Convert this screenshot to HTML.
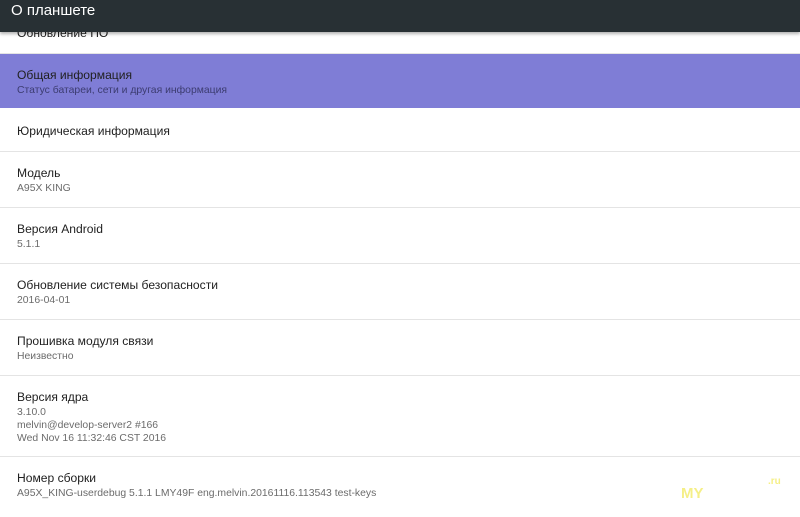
<!DOCTYPE html>
<html><head><meta charset="utf-8"><style>
body{margin:0;width:800px;height:511px;overflow:hidden;background:#fff;font-family:"Liberation Sans",sans-serif;position:relative}
.hdr{position:absolute;left:0;top:0;width:800px;height:32px;background:#283034;color:#fff;font-size:15px;line-height:22px;padding-left:11px;box-sizing:border-box;box-shadow:0 2px 3px rgba(0,0,0,.3);z-index:2}
.it{position:absolute;left:0;width:800px;border-bottom:1px solid #e4e4e4;box-sizing:border-box}
.t{position:absolute;left:17px;font-size:12.1px;color:#212121;white-space:nowrap}
.s{position:absolute;left:17px;font-size:10.4px;color:#6b6b6b;line-height:13px;white-space:nowrap}
</style></head><body>
<div class="hdr">О планшете</div>
<div class="it" style="top:0;height:54px"><div class="t" style="top:26px">Обновление ПО</div></div>
<div class="it" style="top:54px;height:54px;background:#7f7dd6;border:none"><div class="t" style="top:14px">Общая информация</div><div class="s" style="top:30px;color:#3c3c70">Статус батареи, сети и другая информация</div></div>
<div class="it" style="top:108px;height:44px"><div class="t" style="top:16px">Юридическая информация</div></div>
<div class="it" style="top:152px;height:56px"><div class="t" style="top:14px">Модель</div><div class="s" style="top:30px">A95X KING</div></div>
<div class="it" style="top:208px;height:56px"><div class="t" style="top:14px">Версия Android</div><div class="s" style="top:30px">5.1.1</div></div>
<div class="it" style="top:264px;height:56px"><div class="t" style="top:14px">Обновление системы безопасности</div><div class="s" style="top:30px">2016-04-01</div></div>
<div class="it" style="top:320px;height:56px"><div class="t" style="top:14px">Прошивка модуля связи</div><div class="s" style="top:30px">Неизвестно</div></div>
<div class="it" style="top:376px;height:81px"><div class="t" style="top:14px">Версия ядра</div><div class="s" style="top:30px">3.10.0<br>melvin@develop-server2 #166<br>Wed Nov 16 11:32:46 CST 2016</div></div>
<div class="it" style="top:457px;height:60px;border:none"><div class="t" style="top:14px">Номер сборки</div><div class="s" style="top:30px">A95X_KING-userdebug 5.1.1 LMY49F eng.melvin.20161116.113543 test-keys</div></div>
<div style="position:absolute;left:681px;top:485px;font-size:15px;font-weight:bold;color:#f3ec6a;opacity:.8">MY</div>
<div style="position:absolute;left:768px;top:476px;font-size:10px;font-weight:bold;color:#f3ec6a;opacity:.8">.ru</div>
</body></html>
